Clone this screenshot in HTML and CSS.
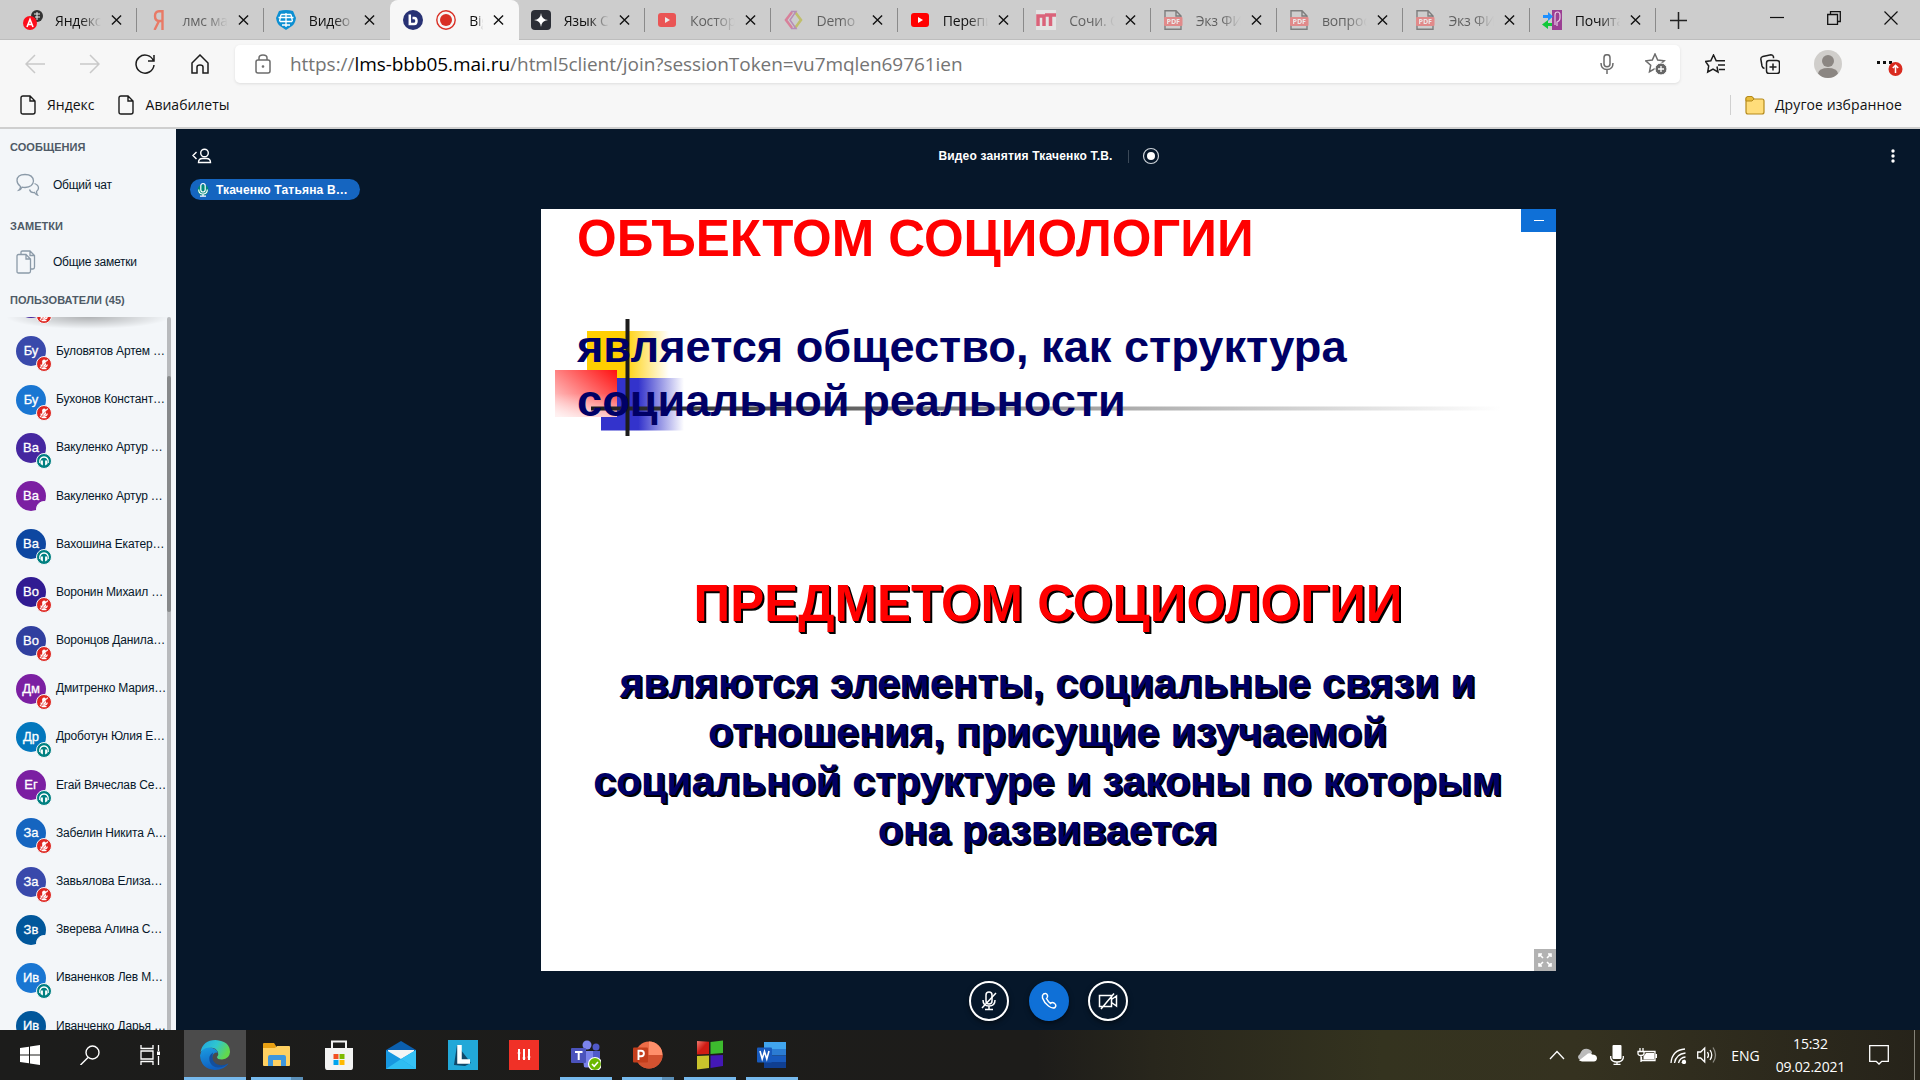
FILE: index.html
```html
<!DOCTYPE html>
<html lang="ru">
<head>
<meta charset="utf-8">
<title>BigBlueButton - Видео занятия Ткаченко Т.В.</title>
<link rel="stylesheet" href="styles.css">
</head>
<body>
<svg class="defs" aria-hidden="true">
  <symbol id="x" viewBox="0 0 12 12"><path d="M1 1l10 10M11 1L1 11" fill="none" stroke="#111" stroke-width="1.5"/></symbol>
  <symbol id="yt" viewBox="0 0 20 20"><rect x="1" y="3" width="18" height="14" rx="3" fill="red"/><path d="M8 7l5 3-5 3z" fill="#fff"/></symbol>
  <symbol id="pdf" viewBox="0 0 20 20"><path d="M2 8V.7h11L18 6v2M2 15v4.300h16V15M13 .7V6h5" fill="none" stroke="#444" stroke-width="1.400"/><rect x="1" y="7" width="18.500" height="9" rx="1" fill="#f05a5a"/><text x="10.200" y="14" font-size="7" font-weight="bold" text-anchor="middle" fill="#fff">PDF</text></symbol>
  <symbol id="page" viewBox="0 0 16 20"><path d="M1 3q0-2 2-2h7l5 5v11q0 2-2 2H3q-2 0-2-2zM10 1v5h5" fill="none" stroke="#1a1a1a" stroke-width="1.400"/></symbol>
  <symbol id="muted" viewBox="0 0 12 12"><path d="M4.200 6.500V3.300a1.900 1.900 0 0 1 3.800 0v3.200a1.900 1.900 0 0 1-3.800 0z" fill="#fff"/><path d="M3 6.500c0 3.300 6.200 3.300 6.200 0M6.100 9v1.600M3.500 10.700h5M10 1.300L2 10" fill="none" stroke="#fff" stroke-width="1.200"/><path d="M9 3.300L3.200 9.500" stroke="#df2721" stroke-width=".7"/></symbol>
  <symbol id="phones" viewBox="0 0 12 12"><path d="M1.800 8c-1.500-8 9.900-8 8.400 0" fill="none" stroke="#fff" stroke-width="1.300"/><path d="M3 5.500h1.900v5L2.500 9zM7.100 5.500H9L9.500 9l-2.400 1.500z" fill="#fff"/></symbol>
</svg>

<header class="tabs">
  <div class="tab"><svg class="fav" viewBox="0 0 20 20"><circle cx="14" cy="6" r="6" fill="#333"/><path d="M11 4h6M12 7h5M14 2v8" stroke="#eee" stroke-width="1"/><circle cx="7" cy="13" r="7" fill="#fc0d1b"/><path d="M4 17L7 9.500 10 17M5 14.500h4" fill="none" stroke="#fff" stroke-width="1.600"/></svg><span class="name">Яндекс</span><svg class="close"><use href="#x"/></svg></div>
  <div class="tab dim"><svg class="fav" viewBox="0 0 20 20"><path d="M13.500 0v20M13.500 1.300H10q-4 0-4 4.700t4 5h3.500M10 11L5.500 20" fill="none" stroke="#fc3f1d" stroke-width="2.400"/></svg><span class="name">лмс маи</span><svg class="close"><use href="#x"/></svg></div>
  <div class="tab"><svg class="fav" viewBox="0 0 20 20"><path d="M3 1q7-2 14 0l3 7q-1 6-4 8l-6 4-6-4Q1 14 0 8z" fill="#0c8fd2"/><path d="M2.500 7.500h15M4 11.500h12M6 15h8M5 4.500h10M10 3v14M5 4.500l-1.500 7M15 4.500l1.500 7" fill="none" stroke="#fff" stroke-width="1.300"/></svg><span class="name">Видео</span><svg class="close"><use href="#x"/></svg></div>
  <div class="tab active"><svg class="fav" viewBox="0 0 20 20"><circle cx="10" cy="10" r="10" fill="#283274"/><path d="M6.800 4.500V14h4.400q2.300 0 2.300-3t-2.300-3H9.500" fill="none" stroke="#fff" stroke-width="2.500"/></svg><svg class="fav rec" viewBox="0 0 20 20"><circle cx="10" cy="10" r="9.200" fill="none" stroke="#d93025" stroke-width="1.400"/><circle cx="10" cy="10" r="6" fill="#d93025"/></svg><span class="name">Big</span><svg class="close"><use href="#x"/></svg></div>
  <div class="tab"><svg class="fav" viewBox="0 0 20 20"><rect width="20" height="20" rx="4" fill="#2b2e36"/><path d="M10 3q.5 6.500 7 7-6.500.5-7 7-.5-6.500-7-7 6.500-.5 7-7z" fill="#fff"/></svg><span class="name">Язык С</span><svg class="close"><use href="#x"/></svg></div>
  <div class="tab dim"><svg class="fav"><use href="#yt"/></svg><span class="name">Косторн</span><svg class="close"><use href="#x"/></svg></div>
  <div class="tab dim"><svg class="fav" viewBox="0 0 20 20" fill="none" stroke-width="2.600"><path d="M9 2L3 10l6 8" stroke="#e04c77"/><path d="M12 2l6 8-6 8" stroke="#b8b526"/><path d="M8 1.500h5L7 10l6 8.500H8" stroke="#a860a8" stroke-width="1.500"/></svg><span class="name">Demo</span><svg class="close"><use href="#x"/></svg></div>
  <div class="tab"><svg class="fav"><use href="#yt"/></svg><span class="name">Перепи</span><svg class="close"><use href="#x"/></svg></div>
  <div class="tab dim"><svg class="fav" viewBox="0 0 20 20"><path fill="#f4f4f4" d="M0 0h20v20H0z"/><path d="M2 16V6h6v10M9 5h11M14.500 5v11" fill="none" stroke="#e5173f" stroke-width="3.500"/></svg><span class="name">Сочи. О</span><svg class="close"><use href="#x"/></svg></div>
  <div class="tab dim"><svg class="fav"><use href="#pdf"/></svg><span class="name">Экз ФИ</span><svg class="close"><use href="#x"/></svg></div>
  <div class="tab dim"><svg class="fav"><use href="#pdf"/></svg><span class="name">вопрос</span><svg class="close"><use href="#x"/></svg></div>
  <div class="tab dim"><svg class="fav"><use href="#pdf"/></svg><span class="name">Экз ФИ</span><svg class="close"><use href="#x"/></svg></div>
  <div class="tab"><svg class="fav" viewBox="0 0 20 20"><rect x="10" width="10" height="20" fill="#9b3f93"/><path d="M13 15V5q0-3 2.500-3T18 5v3q0 3-3 4v4" fill="none" stroke="#e8c8e4" stroke-width="1.200"/><path d="M1 5h5V2l5 4.500L6 11V8H1z" fill="#1e90ff"/><path d="M10 13H6v-3l-6 4.500L6 19v-3h4z" fill="#12c83a"/></svg><span class="name">Почита</span><svg class="close"><use href="#x"/></svg></div>
  <svg class="plus" viewBox="0 0 18 18"><path d="M9 0v18M0 9h18" stroke="#222" stroke-width="1.600"/></svg>
  <div class="win">
    <svg viewBox="0 0 14 14"><path d="M0 6.500h14" stroke="#111" stroke-width="1.200"/></svg>
    <svg viewBox="0 0 14 14"><path d="M.7 3.500h9.800v9.800H.7zM3.500 3.500V.7h9.800v9.800h-2.800" fill="none" stroke="#111" stroke-width="1.300"/></svg>
    <svg viewBox="0 0 14 14"><path d="M.5.5l13 13M13.500.5l-13 13" stroke="#111" stroke-width="1.200"/></svg>
  </div>
</header>

<nav class="toolbar">
  <svg class="ic off" viewBox="0 0 20 20"><path d="M20 10H1M10 1L1 10l9 9"/></svg>
  <svg class="ic off" viewBox="0 0 20 20"><path d="M0 10h19M10 1l9 9-9 9"/></svg>
  <svg class="ic" viewBox="0 0 20 20"><path d="M18.500 7A9 9 0 1 0 19 11M19 1v6h-6"/></svg>
  <svg class="ic" viewBox="0 0 20 20"><path d="M2 9l8-8 8 8v10h-5v-6q0-2-3-2t-3 2v6H2z"/></svg>
  <div class="address">
    <svg class="lock" viewBox="0 0 16 20"><rect x="1" y="6" width="14" height="13" rx="2"/><path d="M4 6V4q0-3 4-3t4 3v2"/><circle cx="8" cy="12.500" r=".6"/></svg>
    <span class="url">https://<b>lms-bbb05.mai.ru</b>/html5client/join?sessionToken=vu7mqlen69761ien</span>
    <svg class="voice" viewBox="0 0 14 20"><rect x="4" y=".7" width="6" height="12" rx="3"/><path d="M1 9q0 6.500 6 6.500T13 9M7 15.500V20"/></svg>
    <svg class="addfav" viewBox="0 0 22 22"><path d="M10 1l2.700 6 6.500.8-5 4.400 1.200 6.500L10 15.500l-5.500 3.200 1.200-6.500-5-4.400L7.300 7z"/><circle cx="16" cy="16" r="6" fill="#666" stroke="#fff" stroke-width="1"/><path d="M16 13v6M13 16h6" stroke="#fff" stroke-width="1.300"/></svg>
  </div>
  <div class="tools">
    <svg class="t1" viewBox="0 0 20 20"><path d="M12 12.500L13 18l-5-3-5.300 3 1-6L.5 7.500l5.300-.7L8.500 1l2.700 5.800H20M13 11h7M14 15.500h6"/></svg>
    <svg class="t2" viewBox="0 0 20 20"><rect x="6.500" y="6.500" width="13" height="13" rx="2.500"/><path d="M13 9.500v7M9.500 13h7M4.500 14.500Q2.500 14 2 12L.8 5q0-2 2-2.500L11 .8q2 0 2.500 2v1.500"/></svg>
    <svg class="face" viewBox="0 0 28 28"><circle cx="14" cy="14" r="14" fill="#d0cecb"/><circle cx="14" cy="11" r="6" fill="#8b8682"/><path d="M4 23.500Q5 18 14 18t10 5.500Q20 28 14 28T4 23.500z" fill="#8b8682"/></svg>
    <svg class="more" viewBox="0 0 26 20"><path d="M0 5h3v3H0zM6 5h3v3H6zM12 5h3v3h-3z" fill="#111" stroke="none"/><circle cx="18.500" cy="13" r="7" fill="#d92b20" stroke="none"/><path d="M18.500 17V9.500M15.800 12l2.700-2.700 2.700 2.700" stroke="#fff"/></svg>
  </div>
</nav>

<div class="bookmarks">
  <svg class="pg"><use href="#page"/></svg><span>Яндекс</span>
  <svg class="pg second"><use href="#page"/></svg><span>Авиабилеты</span>
  <div class="other"><svg viewBox="0 0 20 20"><path d="M1 4q0-2 2-2h4l2 2h8q2 0 2 2v11q0 2-2 2H3q-2 0-2-2z" fill="#ffdd7a" stroke="#b58a1b" stroke-width="1.200"/><path d="M1 5.500V3.500Q1 1.500 3 1.500h4L9 4 7 6H1z" fill="#e9bd3b" stroke="#b58a1b"/></svg><span>Другое избранное</span></div>
</div>

<div class="app">
  <aside class="side">
    <h2 class="h-msg">Сообщения</h2>
    <div class="item chat"><svg viewBox="0 0 24 24"><path d="M4.500 13.500Q1 11 1 7.500 1 1.500 9 1.500t8.500 6.500Q17 14 9 14.500q-2 0-3-.3Q5 16.500 3 17q1.500-1.500 1.500-3.500zM18.500 10.500q4 1.500 4 4.500 0 2-2 3.500 0 2 1 3.500-2-.5-3-2.500-4 .5-5-3"/></svg><span>Общий чат</span></div>
    <h2 class="h-notes">Заметки</h2>
    <div class="item notes"><svg viewBox="0 0 24 24"><path d="M1 6q0-1.500 1.500-1.500H10l4.500 4.500v12q0 2-1.500 2H2.500Q1 23 1 21.500zM10 4.500V9h4.500M5 4.500V2q0-1 1.500-1H14l4.500 4.500V17q0 2-1.500 2h-2M14 1v4.500h4.500"/></svg><span>Общие заметки</span></div>
    <h2 class="h-users">Пользователи (45)</h2>
    <div class="users">
      <div class="list">
        <div class="user"><i class="av c3"><svg class="bd red"><use href="#muted"/></svg></i></div>
        <div class="user"><i class="av c1">Бу<svg class="bd red"><use href="#muted"/></svg></i><span>Буловятов Артем …</span></div>
        <div class="user"><i class="av c2">Бу<svg class="bd red"><use href="#muted"/></svg></i><span>Бухонов Констант…</span></div>
        <div class="user"><i class="av c3">Ва<svg class="bd teal"><use href="#phones"/></svg></i><span>Вакуленко Артур …</span></div>
        <div class="user"><i class="av c4">Ва<svg class="bd none"></svg></i><span>Вакуленко Артур …</span></div>
        <div class="user"><i class="av c5">Ва<svg class="bd teal"><use href="#phones"/></svg></i><span>Вахошина Екатер…</span></div>
        <div class="user"><i class="av c6">Во<svg class="bd red"><use href="#muted"/></svg></i><span>Воронин Михаил …</span></div>
        <div class="user"><i class="av c7">Во<svg class="bd red"><use href="#muted"/></svg></i><span>Воронцов Данила…</span></div>
        <div class="user"><i class="av c4">Дм<svg class="bd red"><use href="#muted"/></svg></i><span>Дмитренко Мария…</span></div>
        <div class="user"><i class="av c8">Др<svg class="bd teal"><use href="#phones"/></svg></i><span>Дроботун Юлия Е…</span></div>
        <div class="user"><i class="av c4">Ег<svg class="bd teal"><use href="#phones"/></svg></i><span>Егай Вячеслав Се…</span></div>
        <div class="user"><i class="av c9">За<svg class="bd red"><use href="#muted"/></svg></i><span>Забелин Никита А…</span></div>
        <div class="user"><i class="av c1">За<svg class="bd red"><use href="#muted"/></svg></i><span>Завьялова Елиза…</span></div>
        <div class="user"><i class="av c10">Зв<svg class="bd none"></svg></i><span>Зверева Алина С…</span></div>
        <div class="user"><i class="av c2">Ив<svg class="bd teal"><use href="#phones"/></svg></i><span>Иваненков Лев М…</span></div>
        <div class="user"><i class="av c10">Ив</i><span>Иванченко Дарья …</span></div>
      </div>
      <div class="bar"><div class="thumb"></div></div>
    </div>
  </aside>

  <main class="stage">
    <div class="head">
      <svg class="toggle" viewBox="0 0 20 16"><path d="M4.500 4L1 7.500 4.500 11M6.500 14.500q0-4 4-4h4q4 0 4 4z"/><circle cx="12.500" cy="5" r="3.800"/></svg>
      <div class="title"><span>Видео занятия Ткаченко Т.В.</span><i></i><svg viewBox="0 0 18 18"><circle cx="9" cy="9" r="7.500" fill="none" stroke="#ccd2d8" stroke-width="1.200"/><circle cx="9" cy="9" r="4" fill="#fff"/></svg></div>
      <svg class="dots" viewBox="0 0 4 14"><circle cx="2" cy="2" r="1.700"/><circle cx="2" cy="7" r="1.700"/><circle cx="2" cy="12" r="1.700"/></svg>
    </div>
    <div class="talk"><svg viewBox="0 0 14 16"><circle cx="7" cy="8" r="5.500" fill="#00897b" stroke="none"/><rect x="4.800" y="1.500" width="4.400" height="8.500" rx="2.200"/><path d="M2.700 7.500q0 4.500 4.300 4.500t4.300-4.500M7 12v2.200M4 14.200h6"/></svg><span>Ткаченко Татьяна В…</span></div>

    <section class="slide">
      <svg class="deco" viewBox="0 0 960 120">
        <defs>
          <linearGradient id="gy"><stop offset=".45" stop-color="#ffcf01"/><stop offset="1" stop-color="#ffcf01" stop-opacity="0"/></linearGradient>
          <linearGradient id="gb"><stop offset=".45" stop-color="#3333cc"/><stop offset="1" stop-color="#3333cc" stop-opacity="0"/></linearGradient>
          <linearGradient id="gr" x1="1" y1="0" x2="0" y2=".9"><stop offset="0" stop-color="#ff1010"/><stop offset="1" stop-color="#ffdede"/></linearGradient>
          <linearGradient id="gl"><stop offset="0" stop-color="#1c1c1c"/><stop offset=".55" stop-color="#a4a4a4"/><stop offset="1" stop-color="#fff"/></linearGradient>
          <linearGradient id="gf" x2="0" y2="1"><stop offset=".5" stop-color="#fff" stop-opacity="0"/><stop offset="1" stop-color="#fff" stop-opacity=".6"/></linearGradient>
        </defs>
        <rect x="46" y="12" width="82" height="47" fill="url(#gy)"/>
        <rect x="60" y="59" width="83" height="52.500" fill="url(#gb)"/>
        <rect x="14" y="51" width="62" height="47" fill="url(#gr)"/>
        <rect x="14" y="51" width="62" height="47" fill="url(#gf)"/>
        <rect x="50" y="87.500" width="910" height="4" fill="url(#gl)"/>
        <rect x="84.500" y="0" width="4" height="117" fill="#1c1c1c"/>
      </svg>
      <h1 class="obj">ОБЪЕКТОМ СОЦИОЛОГИИ</h1>
      <p class="obj-text">является общество, как структура<br>социальной реальности</p>
      <h1 class="subj">ПРЕДМЕТОМ СОЦИОЛОГИИ</h1>
      <p class="subj-text">являются элементы, социальные связи и<br>отношения, присущие изучаемой<br>социальной структуре и законы по которым<br>она развивается</p>
      <div class="minimize"><i></i></div>
      <div class="full"><svg viewBox="0 0 14 14"><path d="M5 5L1 1M1 4V1h3M9 5l4-4M10 1h3v3M5 9l-4 4M1 10v3h3M9 9l4 4M13 10v3h-3"/></svg></div>
    </section>

    <div class="controls">
      <div class="btn"><svg viewBox="0 0 20 20"><rect x="7" y="1" width="6" height="12" rx="3"/><path d="M4 9q0 6 6 6t6-6M10 15v3M6 18.500h8M17 2L3 17"/></svg></div>
      <div class="btn on"><svg viewBox="0 0 20 20"><path d="M4.500 3q3-1.500 4 1.500.5 2-1 3 1.500 3 4 5 1.500-1.500 3.500-.5 3 2 1 4.500-2.500 1.500-6.500-1.500Q5 11.500 3.500 7 3 4 4.500 3z"/></svg></div>
      <div class="btn"><svg viewBox="0 0 20 20"><path d="M1.500 4.500h12v11h-12zM13.500 8.500L18.500 5v10l-5-3.500M16 2.500L3 18"/></svg></div>
    </div>
  </main>
</div>

<footer class="taskbar">
  <div class="app-ic"><svg class="win-logo" viewBox="0 0 20 20"><path d="M0 3l9-1.300v7.800H0zM10 1.500L20 0v9.500H10zM0 10.500h9v7.800L0 17zM10 10.500h10V20l-10-1.500z" fill="#fff"/></svg></div>
  <div class="app-ic"><svg class="win-logo" viewBox="0 0 20 20"><circle cx="12.500" cy="7.500" r="6.500" fill="none" stroke="#fff" stroke-width="1.400"/><path d="M8 12.500L.5 20" stroke="#fff" stroke-width="1.400"/></svg></div>
  <div class="app-ic"><svg class="win-logo" viewBox="0 0 20 20"><path d="M1 0v3.500h12V0M1 20v-3.500h12V20M1 6h12v8H1zM18.500 0v6M18.500 11v9" fill="none" stroke="#fff" stroke-width="1.300"/><path d="M17 6.500h3v3.500h-3z" fill="#fff"/></svg></div>
  <div class="app-ic cur"><svg viewBox="0 0 30 30"><defs><linearGradient id="e1" x2="1" y2=".4"><stop offset="0" stop-color="#1fa4e3"/><stop offset=".55" stop-color="#2fc6cf"/><stop offset="1" stop-color="#62d94d"/></linearGradient><linearGradient id="e2" x2=".3" y2="1"><stop offset="0" stop-color="#1b9de2"/><stop offset="1" stop-color="#0f5fc0"/></linearGradient></defs><path d="M.5 12Q3 0 15.500 0 30 1 30 12q-.5 7-8 7.500-5 0-5-2.500 2-2 1-5-3-6-11-3.500Q3 10 .5 12z" fill="url(#e1)"/><path d="M0 15.500Q1 8 9 7.500q7 .5 9 5-5.500-.5-6 5.500 0 5 5 7.500 5.500 2 11.500-2Q24 30 15 30 1 29 0 15.500z" fill="url(#e2)"/><path d="M13 12.500q-5 3-3.500 8.500 2 6 8.500 6.500 6 0 10-4-5.500 3-10.500 1-5-2.500-5-7 0-3 .5-5z" fill="#134f9e"/></svg></div>
  <div class="app-ic multi"><svg viewBox="0 0 30 30"><path d="M1 4q0-1 1-1h10l2 3v4H1z" fill="#e8a013"/><path d="M1 8h12l2-2h12q1 0 1 1v18q0 1-1 1H2q-1 0-1-1z" fill="#ffd061"/><path d="M6 26v-9q0-2 2-2h14q2 0 2 2v9h-5v-6h-8v6z" fill="#3f97dd"/></svg></div>
  <div class="app-ic"><svg viewBox="0 0 30 30"><path d="M8 10V1.500h14V10" fill="none" stroke="#f3f3f3" stroke-width="2"/><path d="M1 8h28v19q0 3-2 3H3q-2 0-2-3z" fill="#f3f3f3"/><path d="M9.500 14h5v5h-5z" fill="#f25022"/><path d="M15.500 14h5v5h-5z" fill="#7fba00"/><path d="M9.500 20h5v5h-5z" fill="#00a4ef"/><path d="M15.500 20h5v5h-5z" fill="#ffb900"/></svg></div>
  <div class="app-ic"><svg viewBox="0 0 30 30"><path d="M0 10L15 1l15 9v5H0z" fill="#0b5fae"/><path d="M2 10h26v10H2z" fill="#f5f5f5"/><path d="M0 10l15 9 15-9v19H0z" fill="#1797e0"/><path d="M0 29l15-10L30 29z" fill="#2fbdf2"/><path d="M15 19l15-9v19z" fill="#36c1f5"/></svg></div>
  <div class="app-ic"><svg viewBox="0 0 30 30"><path d="M0 0h30v30H0z" fill="#22a8d8"/><path d="M9 5L6 25l11 1 6-3z" fill="#10496b"/><path d="M11.500 5v16.500H22" fill="none" stroke="#fff" stroke-width="4.500"/></svg></div>
  <div class="app-ic"><svg viewBox="0 0 30 30"><path d="M0 0h30v30H0z" fill="#f03127"/><path d="M10 9v11M15 9v11M20 9v11" stroke="#fff" stroke-width="2"/><path d="M8.500 13h3M13.500 18h3M18.500 17h3" stroke="#fff"/></svg></div>
  <div class="app-ic run"><svg viewBox="0 0 30 30"><circle cx="16" cy="5" r="4.500" fill="#7b83eb"/><circle cx="25" cy="7" r="3.500" fill="#5059c9"/><path d="M11 11h11v13q-3 5-9 3z" fill="#7b83eb"/><path d="M22 11h7v10l-7 2z" fill="#5059c9"/><rect y="8" width="15" height="15" rx="1" fill="#4b53bc"/><path d="M4 12h7.500M7.700 12v8" stroke="#fff" stroke-width="2"/><circle cx="24" cy="24" r="6.500" fill="#6bb700" stroke="#fff" stroke-width="1.200"/><path d="M21 24l2.200 2.300L27 22" fill="none" stroke="#fff" stroke-width="1.600"/></svg></div>
  <div class="app-ic multi"><svg viewBox="0 0 30 30"><circle cx="16" cy="15" r="13.500" fill="#ed6c47"/><path d="M16 1.500A13.500 13.500 0 0 1 29.500 15H16z" fill="#ff8f6b"/><path d="M2.500 15h27A13.500 13.500 0 0 1 2.500 15z" fill="#d35230"/><rect y="7.500" width="15" height="15" rx="1" fill="#c43e1c"/><path d="M5.500 20v-9.200h2.700a2.600 2.600 0 0 1 0 5.400H5.500" fill="none" stroke="#fff" stroke-width="1.900"/></svg></div>
  <div class="app-ic run"><svg viewBox="0 0 30 30"><defs><linearGradient id="q1" y2="1"><stop offset="0" stop-color="#f07a70"/><stop offset=".5" stop-color="#d01c14"/></linearGradient></defs><path d="M2 1l12 .8V14L2 14.500z" fill="url(#q1)"/><path d="M15.500 2L28 .5V13l-12.500 1z" fill="#3dbb2e"/><path d="M2 16l12-.5V28L2 29.500z" fill="#c9c32c"/><path d="M15.500 15.500L28 15v11l-12.500 2z" fill="#4418b5"/></svg></div>
  <div class="app-ic run"><svg viewBox="0 0 30 30"><path d="M7 2h22v7H7z" fill="#41a5ee"/><path d="M7 9h22v6.500H7z" fill="#2b7cd3"/><path d="M7 15.500h22V22H7z" fill="#185abd"/><path d="M7 22h22v6H7z" fill="#103f91"/><rect y="7.500" width="15" height="15" rx="1" fill="#185abd"/><path d="M3 11l2.200 8L7.500 11.500 9.800 19 12 11" fill="none" stroke="#fff" stroke-width="1.600"/></svg></div>
  <div class="tray">
    <svg class="y1" viewBox="0 0 16 10"><path d="M1 9l7-7.500L15 9"/></svg>
    <svg class="y2" viewBox="0 0 20 14"><path d="M3 12Q-1 9 3 6q2-6 8-5 4 1 4 4l-8 7z" fill="#bbb" stroke="none"/><path d="M2 12.500l9-7q3-1 4 1 5 0 5 4-.5 3-3 3H5z" fill="#fff" stroke="none"/></svg>
    <svg class="y3" viewBox="0 0 14 20"><rect x="2.500" width="9" height="14" rx="1" fill="#fff" stroke="none"/><path d="M.7 11v2q1 4 6.300 4t6.300-4v-2M7 17v2M3.500 19.300h7"/></svg>
    <svg class="y4" viewBox="0 0 20 14"><path d="M4.500 9v3.500h13.500v-9H7.500M3 0v3M6 0v3M1 3.500h6v2Q7 7.500 4 7.500T1 5.500zM4 7.500V14"/><path d="M9 5h8v6.500H6.500V8.500z" fill="#fff" stroke="none"/><path d="M18.500 6h1.500v4h-1.500z" fill="#fff" stroke="none"/></svg>
    <svg class="y5" viewBox="0 0 17 17"><path d="M1 16Q2 3 15 2M4.500 16Q6 7 15.500 6M8.500 16q1.500-5.500 7-6M12 16q.5-2 3-3"/><circle cx="14" cy="15" r="1.500" fill="#fff"/></svg>
    <svg class="y6" viewBox="0 0 20 18"><path d="M.7 6v6h3l4 4V2l-4 4zM10.500 6q2 3 0 6M13 4q3.500 5 0 10"/><path d="M16 1.500q5 7.500 0 15" opacity=".45"/></svg>
    <span class="lang">ENG</span>
    <div class="clock"><span>15:32</span><span>09.02.2021</span></div>
    <svg class="y7" viewBox="0 0 20 20"><path d="M.7.700h18.600v15.600h-6.500L10 19l-2.800-2.700H.7z"/></svg>
  </div>
  <div class="peek"></div>
</footer>
</body>
</html>
```
FILE: styles.css
```css
* { box-sizing: border-box; }
body {
  margin: 0;
  width: 1920px;
  height: 1080px;
  overflow: hidden;
  display: flex;
  flex-direction: column;
  font-family: "Open Sans", sans-serif;
  background: #f7f7f7;
}
.defs { display: none; }
svg { display: block; flex: none; }

/* tab strip */
.tabs { display: flex; height: 40px; background: #cdcdcd; padding-left: 11px; align-items: center; box-shadow: inset 0 -1px #bdbdbd; }
.tab { width: 126.400px; height: 24px; padding-left: 12px; display: flex; align-items: center; border-right: 1.5px solid #8a8a8a; font-size: 14px; color: #111; }
.tab:nth-child(3) { border-right-color: transparent; }
.fav { width: 20px; height: 20px; margin-right: 13px; }
.tab:first-child .fav { margin-right: 12px; }
.name { flex: 1; min-width: 0; overflow: hidden; white-space: nowrap; letter-spacing: -.2px; mask-image: linear-gradient(90deg, #000 55%, transparent 100%); }
.close { width: 11px; height: 12px; margin: 0 14px 0 10px; }
.dim .fav, .dim .name { opacity: .58; }
.active { height: 40px; background: #f7f7f7; border: 0; border-radius: 8px 8px 0 0; padding-left: 13px; width: 128.500px; }
.active .fav { margin-right: 13px; }
.active .close { margin-right: 15px; }
.plus { width: 17px; height: 17px; margin-left: 14px; }
.win { display: flex; gap: 43px; margin: 0 22px 4px auto; }
.win svg { width: 14px; height: 14px; }

/* navigation row */
.toolbar { display: flex; align-items: center; height: 48px; padding: 0 9px 0 25px; }
.toolbar svg { fill: none; stroke: #1d1d1d; stroke-width: 1.500; }
.ic { width: 20px; height: 20px; margin-right: 35px; }
.toolbar .off { stroke: #c9c9c9; }
.address { display: flex; align-items: center; width: 1445px; height: 38px; margin-left: -10px; padding: 0 13px 0 20px; background: #fff; border-radius: 5px; box-shadow: 0 1px 3px #ddd; }
.toolbar .address svg { stroke: #6c6c6c; }
.lock { width: 16px; height: 20px; margin-right: 19px; }
.url { flex: 1; font-size: 19px; line-height: 24px; letter-spacing: -.05px; color: #747474; white-space: nowrap; }
.url b { font-weight: 400; color: #000; }
.voice { width: 14px; height: 20px; margin-right: 31px; }
.addfav { width: 22px; height: 22px; }
.tools { display: flex; align-items: center; margin-left: 25px; }
.t1, .t2 { width: 20px; height: 20px; margin-right: 35px; }
.toolbar .face { width: 28px; height: 28px; margin: 0 35px 0 -1px; stroke: none; }
.more { width: 26px; height: 20px; margin-top: 4px; }
.bookmarks { display: flex; align-items: center; height: 39px; margin-bottom: 2px; padding: 0 18px 5px 20px; font-size: 14px; box-shadow: 0 2px #cfcfcf; color: #111; }
.bookmarks span { margin-top: -1px; }
.pg { width: 16px; height: 20px; margin-right: 11px; }
.second { margin-left: 23px; margin-right: 12px; }
.other { margin-left: auto; display: flex; align-items: center; gap: 10px; padding-left: 14px; border-left: 1px solid #d0d0d0; letter-spacing: .1px; }
.other svg { width: 20px; height: 20px; }

/* conference client */
.app { display: flex; height: 901px; font-family: "Liberation Sans", Arial, sans-serif; }
.side { width: 176px; height: 901px; background: #f3f6f9; display: flex; flex-direction: column; overflow: hidden; }
.side h2 { margin: 0 0 0 10px; font-size: 11px; line-height: 14px; color: #4e5a66; text-transform: uppercase; letter-spacing: .05px; }
.h-msg { padding-top: 11px; }
.item { display: flex; align-items: center; gap: 13px; padding-left: 16px; height: 30px; font-size: 12px; letter-spacing: -.25px; color: #06172a; }
.item svg { width: 24px; height: 24px; fill: none; stroke: #8b9aa8; stroke-width: 1.300; }
.chat { margin-top: 16px; }
.side .h-notes { margin-top: 19px; }
.notes { margin-top: 14px; }
.side .h-users { margin-top: 16px; }
.users { display: flex; flex: 1; min-height: 0; margin-top: 10px; overflow: hidden; background: radial-gradient(ellipse 82px 12px at 88px 0, rgba(0,0,0,.28), rgba(0,0,0,0)); }
.list { width: 167px; margin-top: -37.800px; }
.user { display: flex; align-items: center; height: 48.200px; padding-left: 16px; gap: 10px; font-size: 12px; color: #06172a; letter-spacing: -.16px; white-space: nowrap; }
.user span { margin-top: -1px; }
.av { position: relative; flex: none; width: 30px; height: 30px; border-radius: 50%; color: #fff; font: normal 13px/30px "Liberation Sans", Arial, sans-serif; text-align: center; -webkit-text-stroke: .3px #fff; letter-spacing: 0; }
.bd { position: absolute; left: 20px; top: 20px; width: 16px; height: 16px; padding: 1px; border: 1px solid #f3f6f9; border-radius: 50%; }
.red { background: #df2721; }
.teal { background: #008081; }
.none { background: #f3f6f9; }
.c1 { background: #3949ab; } .c2 { background: #1976d2; } .c3 { background: #4527a0; } .c4 { background: #7b1fa2; } .c5 { background: #0d47a1; }
.c6 { background: #311b92; } .c7 { background: #303f9f; } .c8 { background: #0277bd; } .c9 { background: #1565c0; } .c10 { background: #01579b; }
.bar { width: 4px; background: #b8babd; padding-top: 59px; border-radius: 2px 2px 0 0; }
.thumb { height: 236px; background: #87898b; border-radius: 2px; }

.stage { flex: 1; background: #06172a; display: flex; flex-direction: column; color: #fff; }
.head { display: flex; align-items: center; justify-content: space-between; height: 54px; padding: 0 25px 0 16px; }
.toggle { width: 20px; height: 16px; fill: none; stroke: #fff; stroke-width: 1.400; }
.title { display: flex; align-items: center; margin-right: 5px; font-size: 12px; font-weight: 700; letter-spacing: .18px; }
.title i { width: 1px; height: 13px; margin: 0 13px 0 15px; background: #3b4958; }
.title svg { width: 18px; height: 18px; }
.dots { width: 4px; height: 14px; fill: #fff; }
.talk { display: flex; align-items: center; width: 170px; height: 21px; margin: -4px 0 0 14px; padding-left: 6px; gap: 6px; background: #1565c0; border-radius: 11px; font-size: 12px; font-weight: 700; letter-spacing: .18px; }
.talk svg { width: 14px; height: 16px; fill: none; stroke: #fff; stroke-width: 1.200; }

.slide { position: relative; width: 1015px; height: 762px; margin: 9px 0 0 365px; background: #fff; font-weight: 700; white-space: nowrap; overflow: hidden; }
.slide h1, .slide p { position: relative; margin: 0; }
.slide h1 { font-size: 51px; line-height: 58px; color: red; }
.deco { position: absolute; left: 0; top: 110px; width: 960px; height: 120px; }
.slide .obj { padding: 1px 0 0 36px; }
.slide .obj-text { padding: 52px 0 0 36px; font-size: 45.200px; line-height: 54px; color: #000066; }
.subj, .subj-text { text-align: center; }
.slide .subj { margin-top: 147px; padding-right: 1px; text-shadow: 1px 1px #000, 2px 2px #000; }
.slide .subj-text { margin-top: 26px; padding-right: 2px; font-size: 41.050px; line-height: 49px; color: #000066; text-shadow: 1px 1px #000, 2px 2px #000; }
.minimize { position: absolute; right: 0; top: 0; width: 35px; height: 23px; background: #0f70d7; display: grid; place-items: center; }
.minimize i { width: 10px; height: 1px; background: #fff; }
.full { position: absolute; right: 0; bottom: 0; width: 22px; height: 22px; background: #b2b2b2; display: grid; place-items: center; }
.full svg { width: 14px; height: 14px; fill: none; stroke: #fff; stroke-width: 1.600; }
.controls { display: flex; justify-content: center; gap: 19.500px; padding: 10px 0 0 1px; }
.btn { width: 40px; height: 40px; border: 2px solid #fff; border-radius: 50%; display: grid; place-items: center; box-shadow: 0 2px 5px #00000080; }
.on { background: #0f70d7; border-color: #0f70d7; }
.btn svg { width: 20px; height: 20px; fill: none; stroke: #fff; stroke-width: 1.500; }

/* Windows taskbar */
.taskbar { display: flex; height: 50px; background: linear-gradient(90deg, #1c1c1b 0, #1d1c1a 54%, #28261c 60%, #34331f 72%, #353220 82%, #26231a 100%); }
.app-ic { position: relative; width: 61.900px; display: flex; align-items: center; justify-content: center; }
.app-ic svg { width: 30px; height: 30px; }
.app-ic .win-logo { width: 20px; height: 20px; }
.app-ic:nth-child(-n+3) { width: 60px; }
.app-ic.cur { margin-left: 4px; background: #4b4b4b; border-bottom: 3px solid #76b9ed; padding-top: 3px; }
.run::after, .multi::after { content: ""; position: absolute; left: 5px; right: 5px; bottom: 0; height: 3px; background: #76b9ed; }
.multi::after { background: linear-gradient(90deg, #76b9ed 40px, #5b8fb8 40px); }
.tray { display: flex; align-items: center; margin-left: auto; margin-right: 25px; color: #fff; font-size: 14px; }
.tray svg { fill: none; stroke: #fff; stroke-width: 1.300; }
.y1 { width: 16px; height: 10px; margin-right: 12px; }
.y2 { width: 20px; height: 14px; margin-right: 13px; }
.y3 { width: 14px; height: 20px; margin-right: 13px; }
.y4 { width: 20px; height: 14px; margin-right: 13px; }
.y5 { width: 17px; height: 17px; margin-right: 10px; }
.y6 { width: 20px; height: 18px; margin-right: 14px; }
.lang { margin-right: 16px; }
.clock { display: flex; flex-direction: column; align-items: center; line-height: 23px; letter-spacing: -.22px; margin-right: 24px; }
.y7 { width: 20px; height: 20px; }
.peek { width: 6px; border-left: 1px solid #858379; }
```
